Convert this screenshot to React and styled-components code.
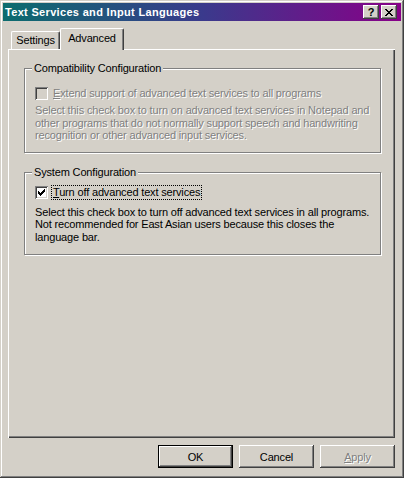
import React from 'react'
import styled, { createGlobalStyle, css } from 'styled-components'

// classic 3D palette
const face = '#d4d0c8'
const shadow = '#808080'
const dark = '#404040'
const light = '#ffffff'

const GlobalStyle = createGlobalStyle`
  html, body { margin: 0; padding: 0; background: ${face}; }
  body {
    font-family: "Liberation Sans", Arial, sans-serif;
    font-size: 11px;
    letter-spacing: -0.16px;
    color: #000;
  }
  * { box-sizing: border-box; }
`

const raised = css`
  box-shadow: inset -1px -1px ${dark}, inset 1px 1px ${light}, inset -2px -2px ${shadow}, inset 2px 2px ${face};
`

const disabledText = css`
  color: ${shadow};
  text-shadow: 1px 1px 0 ${light};
`

const Window = styled.div`
  width: 404px;
  height: 478px;
  padding: 3px;
  display: flex;
  flex-direction: column;
  background: ${face};
  box-shadow: inset -1px -1px ${dark}, inset 1px 1px ${face}, inset -2px -2px ${shadow}, inset 2px 2px ${light};
`

const TitleBar = styled.div`
  height: 18px;
  display: flex;
  align-items: center;
  padding: 0 4px 0 2px;
  background: linear-gradient(90deg, #0c6c6e 0%, #3a3a8c 50%, #880088 100%);
  color: ${light};
  font-weight: bold;
  font-size: 11px;
  letter-spacing: 0.32px;
`

const TitleText = styled.div`
  flex: 1;
  white-space: nowrap;
`

const TitleButton = styled.div`
  width: 16px;
  height: 14px;
  margin-left: ${p => p.$gap || 0}px;
  display: flex;
  align-items: center;
  justify-content: center;
  background: ${face};
  color: #000;
  font-weight: bold;
  font-size: 11px;
  letter-spacing: 0;
  line-height: 14px;
  ${raised}
`

const Body = styled.div`
  flex: 1;
  display: flex;
  flex-direction: column;
  padding: 7px 6px 0 5px;
`

const TabList = styled.div`
  height: 21px;
  display: flex;
  align-items: flex-end;
  padding-left: 3px;
`

const Tab = styled.div`
  position: relative;
  z-index: ${p => (p.$active ? 2 : 1)};
  width: ${p => p.$w}px;
  height: ${p => (p.$active ? 22 : 18)}px;
  margin-bottom: ${p => (p.$active ? -1 : 0)}px;
  display: flex;
  align-items: flex-start;
  justify-content: center;
  padding-top: ${p => (p.$active ? 3 : 2)}px;
  background: ${face};
  border-top: 1px solid ${light};
  border-left: 1px solid ${light};
  border-right: 1px solid ${dark};
  border-radius: 2px 2px 0 0;
  box-shadow: inset -1px 0 ${shadow};
  line-height: 13px;
  white-space: nowrap;
`

const Panel = styled.div`
  flex: 1;
  display: flex;
  flex-direction: column;
  padding: 13px 14px 0 16px;
  background: ${face};
  box-shadow: inset 1px 1px ${light}, inset -1px -1px ${dark}, inset -2px -2px ${shadow};
`

const GroupBox = styled.fieldset`
  margin: ${p => p.$mt || 0}px 0 0 0;
  padding: ${p => p.$pt}px 10px ${p => p.$pb}px 10px;
  min-width: 0;
  border: 1px solid ${shadow};
  box-shadow: inset 1px 1px ${light}, 1px 1px ${light};
`

const Legend = styled.legend`
  padding: 0 2px;
  margin-left: -3px;
  line-height: 13px;
  background: ${face};
`

const CheckRow = styled.div`
  height: 15px;
  display: flex;
  align-items: center;
`

const Box = styled.div`
  width: 13px;
  height: 13px;
  flex: none;
  background: ${p => (p.$disabled ? face : light)};
  box-shadow: inset 1px 1px ${shadow}, inset -1px -1px ${light}, inset 2px 2px ${dark}, inset -2px -2px ${face};

  svg { display: block; }
`

const CheckLabel = styled.span`
  margin-left: 3px;
  padding: 0 1px;
  line-height: 13px;
  border: 1px dotted ${p => (p.$focus ? '#000' : 'transparent')};
  white-space: nowrap;
  ${p => p.$disabled && disabledText}
`

const Description = styled.div`
  margin-top: ${p => p.$mt}px;
  line-height: 12.5px;
  white-space: nowrap;
  ${p => p.$disabled && disabledText}
`

const Footer = styled.div`
  height: 37px;
  display: flex;
  justify-content: flex-end;
  align-items: flex-start;
  gap: 6px;
  padding-top: 7px;
`

const Button = styled.button`
  width: 75px;
  height: 23px;
  padding: 0;
  font: inherit;
  letter-spacing: inherit;
  background: ${face};
  color: #000;
  border: ${p => (p.$default ? '1px solid #000' : 'none')};
  ${raised}
  ${p => p.disabled && disabledText}
`

const CheckBox = ({ checked, disabled }) => (
  <Box $disabled={disabled}>
    {checked && (
      <svg width="13" height="13" shapeRendering="crispEdges">
        {[5, 6, 7, 6, 5, 4, 3].map((top, i) => (
          <rect key={i} x={3 + i} y={top} width="1" height="3" fill="#000" />
        ))}
      </svg>
    )}
  </Box>
)

const closeRows = [[0, 1, 6, 7], [1, 2, 5, 6], [2, 3, 4, 5], [3, 4], [2, 3, 4, 5], [1, 2, 5, 6], [0, 1, 6, 7]]

const CloseGlyph = () => (
  <svg width="8" height="7" shapeRendering="crispEdges">
    {closeRows.map((row, y) => row.map(x => <rect key={y + '-' + x} x={x} y={y} width="1" height="1" fill="#000" />))}
  </svg>
)

export default function App() {
  return (
    <>
      <GlobalStyle />
      <Window>
        <TitleBar>
          <TitleText>Text Services and Input Languages</TitleText>
          <TitleButton>?</TitleButton>
          <TitleButton $gap={2}><CloseGlyph /></TitleButton>
        </TitleBar>

        <Body>
          <TabList>
            <Tab $w={49}>Settings</Tab>
            <Tab $w={64} $active>Advanced</Tab>
          </TabList>

          <Panel>
            <GroupBox $pt={11} $pb={10}>
              <Legend>Compatibility Configuration</Legend>
              <CheckRow>
                <CheckBox disabled />
                <CheckLabel $disabled><u>E</u>xtend support of advanced text services to all programs</CheckLabel>
              </CheckRow>
              <Description $mt={3} $disabled>
                Select this check box to turn on advanced text services in Notepad and<br />
                other programs that do not normally support speech and handwriting<br />
                recognition or other advanced input services.
              </Description>
            </GroupBox>

            <GroupBox $mt={13} $pt={6} $pb={11}>
              <Legend>System Configuration</Legend>
              <CheckRow>
                <CheckBox checked />
                <CheckLabel $focus><u>T</u>urn off advanced text services</CheckLabel>
              </CheckRow>
              <Description $mt={6}>
                Select this check box to turn off advanced text services in all programs.<br />
                Not recommended for East Asian users because this closes the<br />
                language bar.
              </Description>
            </GroupBox>
          </Panel>

          <Footer>
            <Button $default>OK</Button>
            <Button>Cancel</Button>
            <Button disabled><u>A</u>pply</Button>
          </Footer>
        </Body>
      </Window>
    </>
  )
}
